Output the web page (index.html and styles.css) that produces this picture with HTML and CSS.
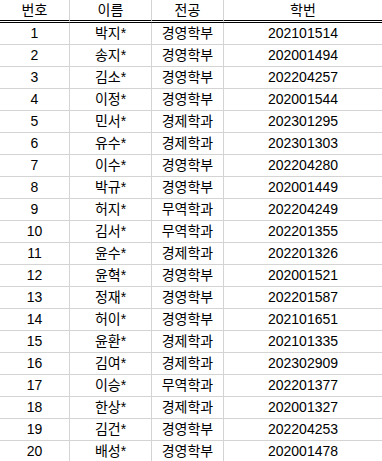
FILE: index.html
```html
<!DOCTYPE html>
<html lang="ko">
<head>
<meta charset="utf-8">
<link rel="stylesheet" href="styles.css">
</head>
<body>
<table class="students">
  <thead>
    <tr><th class="c-no">번호</th><th class="c-name">이름</th><th class="c-major">전공</th><th class="c-id">학번</th></tr>
  </thead>
  <tbody>
    <tr><td>1</td><td>박지*</td><td>경영학부</td><td>202101514</td></tr>
    <tr><td>2</td><td>송지*</td><td>경영학부</td><td>202001494</td></tr>
    <tr><td>3</td><td>김소*</td><td>경영학부</td><td>202204257</td></tr>
    <tr><td>4</td><td>이정*</td><td>경영학부</td><td>202001544</td></tr>
    <tr><td>5</td><td>민서*</td><td>경제학과</td><td>202301295</td></tr>
    <tr><td>6</td><td>유수*</td><td>경제학과</td><td>202301303</td></tr>
    <tr><td>7</td><td>이수*</td><td>경영학부</td><td>202204280</td></tr>
    <tr><td>8</td><td>박규*</td><td>경영학부</td><td>202001449</td></tr>
    <tr><td>9</td><td>허지*</td><td>무역학과</td><td>202204249</td></tr>
    <tr><td>10</td><td>김서*</td><td>무역학과</td><td>202201355</td></tr>
    <tr><td>11</td><td>윤수*</td><td>경제학과</td><td>202201326</td></tr>
    <tr><td>12</td><td>윤혁*</td><td>경영학부</td><td>202001521</td></tr>
    <tr><td>13</td><td>정재*</td><td>경영학부</td><td>202201587</td></tr>
    <tr><td>14</td><td>허이*</td><td>경영학부</td><td>202101651</td></tr>
    <tr><td>15</td><td>윤환*</td><td>경제학과</td><td>202101335</td></tr>
    <tr><td>16</td><td>김여*</td><td>경제학과</td><td>202302909</td></tr>
    <tr><td>17</td><td>이승*</td><td>무역학과</td><td>202201377</td></tr>
    <tr><td>18</td><td>한상*</td><td>경제학과</td><td>202001327</td></tr>
    <tr><td>19</td><td>김건*</td><td>경영학부</td><td>202204253</td></tr>
    <tr><td>20</td><td>배성*</td><td>경영학부</td><td>202001478</td></tr>
  </tbody>
</table>
</body>
</html>
```
FILE: styles.css
```css
html, body {
  margin: 0;
  padding: 0;
  background: #ffffff;
}

body {
  font-family: "Liberation Sans", "Noto Sans CJK KR", sans-serif;
  font-size: 14px;
  color: #000000;
}

.students {
  width: 382px;
  table-layout: fixed;
  border-collapse: separate;
  border-spacing: 0;
}

.students th,
.students td {
  box-sizing: border-box;
  padding: 0;
  text-align: center;
  font-weight: normal;
  white-space: nowrap;
  border-right: 1px solid #d4d4d4;
}

.students th:last-child,
.students td:last-child {
  border-right: none;
}

.students th {
  height: 23px;
  line-height: 20px;
  vertical-align: middle;
  border-bottom: 3px double #000000;
}

.students td {
  height: 22px;
  line-height: 21px;
  vertical-align: middle;
  border-bottom: 1px solid #d4d4d4;
}

.c-no { width: 70px; }
.c-name { width: 82px; }
.c-major { width: 72px; }
.c-id { width: 158px; }
```
